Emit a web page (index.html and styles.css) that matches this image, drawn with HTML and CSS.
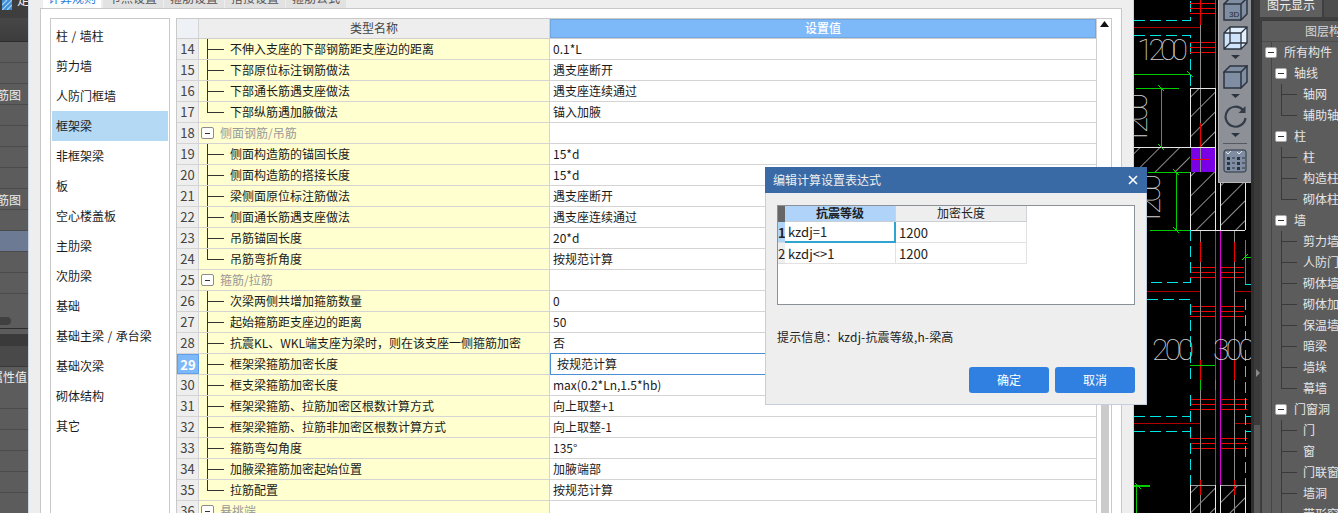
FILE: index.html
```html
<!DOCTYPE html>
<html lang="zh-CN">
<head>
<meta charset="utf-8">
<title>计算设置</title>
<link rel="stylesheet" href="styles.css">
</head>
<body>
<div class="app">
  <aside class="side">
    <div class="side-title"><svg class="logo" width="10" height="10" viewBox="0 0 10 10"><rect width="10" height="10" fill="#3f8fd6"/><path d="M0 5L5 0M0 10L10 0M5 10L10 5" stroke="#a9d3f2" stroke-width="1.200"/></svg><span>定</span></div>
    <div class="side-band"></div>
    <div class="side-row"></div>
    <div class="side-row"></div>
    <div class="side-row"><span>钢筋图</span></div>
    <div class="side-row"></div>
    <div class="side-row"></div>
    <div class="side-row"></div>
    <div class="side-row"></div>
    <div class="side-row"><span>钢筋图</span></div>
    <div class="side-row"></div>
    <div class="side-row is-sel"></div>
    <div class="side-row"></div>
    <div class="side-row"></div>
    <div class="side-scroll"><i></i></div>
    <div class="side-dark"></div>
    <div class="side-sub"></div>
    <div class="side-row tall"><span>属性值</span></div>
    <div class="side-row"></div>
    <div class="side-row"></div>
    <div class="side-row"></div>
    <div class="side-row"></div>
  </aside>

  <main class="main">
    <nav class="tabs">
      <div class="tab is-on">计算规则</div>
      <div class="tab">节点设置</div>
      <div class="tab">箍筋设置</div>
      <div class="tab">搭接设置</div>
      <div class="tab">箍筋公式</div>
    </nav>
    <section class="panel">
      <ul class="cats">
        <li>柱 / 墙柱</li>
        <li>剪力墙</li>
        <li>人防门框墙</li>
        <li class="is-on">框架梁</li>
        <li>非框架梁</li>
        <li>板</li>
        <li>空心楼盖板</li>
        <li>主肋梁</li>
        <li>次肋梁</li>
        <li>基础</li>
        <li>基础主梁 / 承台梁</li>
        <li>基础次梁</li>
        <li>砌体结构</li>
        <li>其它</li>
      </ul>
      <div class="grid">
        <div class="grid-table">
          <div class="row head">
            <div class="num"></div>
            <div class="name">类型名称</div>
            <div class="val">设置值</div>
          </div>
          <div class="row"><div class="num">14</div><div class="name"><i class="tl"></i>不伸入支座的下部钢筋距支座边的距离</div><div class="val">0.1*L</div></div>
          <div class="row"><div class="num">15</div><div class="name"><i class="tl"></i>下部原位标注钢筋做法</div><div class="val">遇支座断开</div></div>
          <div class="row"><div class="num">16</div><div class="name"><i class="tl"></i>下部通长筋遇支座做法</div><div class="val">遇支座连续通过</div></div>
          <div class="row"><div class="num">17</div><div class="name"><i class="tl end"></i>下部纵筋遇加腋做法</div><div class="val">锚入加腋</div></div>
          <div class="row"><div class="num">18</div><div class="name group"><i class="minus"></i>侧面钢筋/吊筋</div><div class="val"></div></div>
          <div class="row"><div class="num">19</div><div class="name"><i class="tl"></i>侧面构造筋的锚固长度</div><div class="val">15*d</div></div>
          <div class="row"><div class="num">20</div><div class="name"><i class="tl"></i>侧面构造筋的搭接长度</div><div class="val">15*d</div></div>
          <div class="row"><div class="num">21</div><div class="name"><i class="tl"></i>梁侧面原位标注筋做法</div><div class="val">遇支座断开</div></div>
          <div class="row"><div class="num">22</div><div class="name"><i class="tl"></i>侧面通长筋遇支座做法</div><div class="val">遇支座连续通过</div></div>
          <div class="row"><div class="num">23</div><div class="name"><i class="tl"></i>吊筋锚固长度</div><div class="val">20*d</div></div>
          <div class="row"><div class="num">24</div><div class="name"><i class="tl end"></i>吊筋弯折角度</div><div class="val">按规范计算</div></div>
          <div class="row"><div class="num">25</div><div class="name group"><i class="minus"></i>箍筋/拉筋</div><div class="val"></div></div>
          <div class="row"><div class="num">26</div><div class="name"><i class="tl"></i>次梁两侧共增加箍筋数量</div><div class="val">0</div></div>
          <div class="row"><div class="num">27</div><div class="name"><i class="tl"></i>起始箍筋距支座边的距离</div><div class="val">50</div></div>
          <div class="row"><div class="num">28</div><div class="name"><i class="tl"></i>抗震KL、WKL端支座为梁时，则在该支座一侧箍筋加密</div><div class="val">否</div></div>
          <div class="row is-active"><div class="num">29</div><div class="name"><i class="tl"></i>框架梁箍筋加密长度</div><div class="val">按规范计算</div></div>
          <div class="row"><div class="num">30</div><div class="name"><i class="tl"></i>框支梁箍筋加密长度</div><div class="val">max(0.2*Ln,1.5*hb)</div></div>
          <div class="row"><div class="num">31</div><div class="name"><i class="tl"></i>框架梁箍筋、拉筋加密区根数计算方式</div><div class="val">向上取整+1</div></div>
          <div class="row"><div class="num">32</div><div class="name"><i class="tl"></i>框架梁箍筋、拉筋非加密区根数计算方式</div><div class="val">向上取整-1</div></div>
          <div class="row"><div class="num">33</div><div class="name"><i class="tl"></i>箍筋弯勾角度</div><div class="val">135°</div></div>
          <div class="row"><div class="num">34</div><div class="name"><i class="tl"></i>加腋梁箍筋加密起始位置</div><div class="val">加腋端部</div></div>
          <div class="row"><div class="num">35</div><div class="name"><i class="tl end"></i>拉筋配置</div><div class="val">按规范计算</div></div>
          <div class="row"><div class="num">36</div><div class="name group"><i class="minus"></i>悬挑端</div><div class="val"></div></div>
        </div>
        <div class="vbar">
          <svg class="vbar-up" width="9" height="6" viewBox="0 0 9 6"><path d="M4.5 0L9 6H0z" fill="#111"/></svg>
          <div class="vbar-thumb"></div>
        </div>
      </div>
    </section>
  </main>

  <div class="cad">
    <svg class="cad-draw" width="117" height="513" viewBox="1134 0 117 513">
      <defs>
        <pattern id="hatch" width="14" height="14" patternUnits="userSpaceOnUse" patternTransform="rotate(45)">
          <rect width="1" height="14" fill="#8c8c8c"/>
        </pattern>
      </defs>
      <g shape-rendering="crispEdges" fill="none">
        <path d="M1134 20H1190V0M1134 35H1190V90" stroke="#00e5e5" stroke-dasharray="11 5"/>
        <path d="M1134 27H1200M1147 291H1200M1235 291H1251M1134 423H1200M1235 423H1251" stroke="#b00000"/>
        <path d="M1190 3H1215M1190 8H1215M1190 13H1215M1190 42H1215M1190 47H1215M1190 52H1215" stroke="#f00000"/>
        <path d="M1190 267H1215M1190 272H1215M1190 277H1215M1220 267H1244M1220 272H1244M1220 277H1244M1190 306H1215M1190 311H1215M1190 316H1215M1220 306H1244M1220 311H1244M1220 316H1244" stroke="#f00000"/>
        <path d="M1190 399H1215M1190 404H1215M1190 409H1215M1222 399H1247M1222 404H1247M1222 409H1247M1190 438H1215M1190 443H1215M1190 448H1215M1222 438H1247M1222 443H1247M1222 448H1247" stroke="#f00000"/>
        <rect x="1190" y="88" width="25" height="59" fill="url(#hatch)"/>
        <rect x="1134" y="148" width="56" height="24" fill="url(#hatch)"/>
        <rect x="1190" y="172" width="25" height="58" fill="url(#hatch)"/>
        <rect x="1220" y="172" width="25" height="58" fill="url(#hatch)"/>
        <rect x="1190" y="485" width="25" height="28" fill="url(#hatch)"/>
        <rect x="1220" y="485" width="25" height="28" fill="url(#hatch)"/>
        <rect x="1191" y="148" width="24" height="24" fill="#7a00e6"/>
        <path d="M1200 0V172M1200 230V513M1234 230V513" stroke="#8c8c8c"/>
        <path d="M1200 0V25M1200 123V147M1200 242V262M1234 242V262M1200 360V390M1234 360V380M1200 480V495M1234 480V495M1191 159H1210" stroke="#f00000"/>
        <path d="M1215 0V88M1215 230V513M1220 230V513" stroke="#d800d8"/>
        <path d="M1190 88H1215M1190 88V147M1215 88V230M1134 147H1215M1190 172V230M1190 230H1245M1220 183V230M1245 183V230" stroke="#e6e6e6"/>
        <path d="M1190 485H1215M1220 485H1245" stroke="#9a9a9a"/>
        <path d="M1215 485V513M1245 485V513M1190 485V513M1220 485V513" stroke="#e6e6e6"/>
        <path d="M1190 230V282H1147M1147 299H1190V380M1190 395V485M1245 284H1251M1245 299V340M1245 350V485" stroke="#00e5e5" stroke-dasharray="11 5"/>
        <path d="M1134 416H1190M1134 431H1190M1245 416H1251M1245 431H1251" stroke="#00e5e5" stroke-dasharray="11 5"/>
        <path d="M1134 74H1190M1136 88H1179M1161 88V147M1148 172H1190M1176 172V230M1150 230H1190M1245 240V284M1245 257H1251M1190 365H1215M1136 485V513M1134 485H1150M1134 486H1150M1200 380V390M1215 380V390" stroke="#00cc00"/>
      </g>
      <path d="M1187 71L1193 77M1158 85L1164 91M1158 144L1164 150M1173 169L1179 175M1173 227L1179 233M1242 260L1248 254M1135 483L1141 489" stroke="#00e000" fill="none"/>
      <g class="cad-text">
        <text x="1137" y="60" textLength="51">1200</text>
        <text transform="translate(1147 145) rotate(-90)" textLength="52">1200</text>
        <text transform="translate(1160 226) rotate(-90)" textLength="52">1200</text>
        <text x="1152" y="360" textLength="42">200</text>
        <text x="1213" y="360" textLength="42">300</text>
      </g>
    </svg>

    <div class="tools">
      <svg class="t-cube first" width="25" height="24" viewBox="0 0 25 24"><path d="M1 7H18V23H1zM1 7L7 1H24L18 7zM18 7L24 1V17L18 23z" fill="#7f8ea3" stroke="#2c343f" stroke-width="1.500"/><text class="t-3d" x="6" y="20">3D</text></svg>
      <svg class="t-cube" width="25" height="24" viewBox="0 0 25 24"><path d="M1 7H18V23H1z" fill="#cfe4fb"/><path d="M1 7L7 1H24L18 7zM18 7L24 1V17L18 23z" fill="#e3f0fd"/><path d="M1 7H18V23H1zM1 7L7 1H24V17L18 23M18 7L24 1M7 1V17H24M7 17L1 23" fill="none" stroke="#2c343f" stroke-width="1.300"/></svg>
      <svg class="t-arrow" width="9" height="4" viewBox="0 0 9 4"><path d="M0 0H9L4.5 4z" fill="#2c343f"/></svg>
      <svg class="t-cube c3" width="25" height="24" viewBox="0 0 25 24"><path d="M1 7H18V23H1zM1 7L7 1H24L18 7zM18 7L24 1V17L18 23z" fill="#7f8ea3" stroke="#2c343f" stroke-width="1.500"/></svg>
      <svg class="t-arrow" width="9" height="4" viewBox="0 0 9 4"><path d="M0 0H9L4.5 4z" fill="#2c343f"/></svg>
      <svg class="t-rot" width="24" height="23" viewBox="0 0 24 23"><path d="M20 5A10 10 0 1 0 22.500 13" fill="none" stroke="#333c48" stroke-width="2.200"/><path d="M22.500 1V8H15.500z" fill="#333c48"/></svg>
      <svg class="t-arrow" width="9" height="4" viewBox="0 0 9 4"><path d="M0 0H9L4.5 4z" fill="#2c343f"/></svg>
      <div class="t-sep"></div>
      <svg class="t-grid" width="24" height="24" viewBox="0 0 24 24"><rect x="1" y="1" width="22" height="22" rx="2" fill="#7f8ea3" stroke="#2c343f"/><path d="M3 3l2 2 3-3M14 3l2 2 3-3" fill="none" stroke="#e8e8e8"/><path d="M4 8h3v3H4zM4 13h3v3H4zM4 18h3v3H4zM14 8h3v3h-3zM14 13h3v3h-3zM14 18h3v3h-3z" fill="#2c343f"/><path d="M9 9h3M9 14h3M9 19h3M19 9h3M19 14h3M19 19h3" stroke="#2c343f"/></svg>
    </div>
  </div>

  <div class="split"><i></i></div>

  <aside class="rpanel">
    <div class="rtabs">
      <div class="rtab is-on">图元显示</div>
      <div class="rtab">楼层</div>
    </div>
    <div class="rbox">
      <div class="rhead">图层构件</div>
      <div class="rtree">
        <div class="node l0"><i class="rminus"></i>所有构件</div>
        <div class="node l1"><i class="rminus"></i>轴线</div>
        <div class="node l2"><i class="rl"></i>轴网</div>
        <div class="node l2"><i class="rl end"></i>辅助轴线</div>
        <div class="node l1"><i class="rminus"></i>柱</div>
        <div class="node l2"><i class="rl"></i>柱</div>
        <div class="node l2"><i class="rl"></i>构造柱</div>
        <div class="node l2"><i class="rl end"></i>砌体柱</div>
        <div class="node l1"><i class="rminus"></i>墙</div>
        <div class="node l2"><i class="rl"></i>剪力墙</div>
        <div class="node l2"><i class="rl"></i>人防门框墙</div>
        <div class="node l2"><i class="rl"></i>砌体墙</div>
        <div class="node l2"><i class="rl"></i>砌体加筋</div>
        <div class="node l2"><i class="rl"></i>保温墙</div>
        <div class="node l2"><i class="rl"></i>暗梁</div>
        <div class="node l2"><i class="rl"></i>墙垛</div>
        <div class="node l2"><i class="rl end"></i>幕墙</div>
        <div class="node l1"><i class="rminus"></i>门窗洞</div>
        <div class="node l2"><i class="rl"></i>门</div>
        <div class="node l2"><i class="rl"></i>窗</div>
        <div class="node l2"><i class="rl"></i>门联窗</div>
        <div class="node l2"><i class="rl"></i>墙洞</div>
        <div class="node l2"><i class="rl"></i>带形窗</div>
      </div>
    </div>
  </aside>
</div>

<div class="dlg">
  <header class="dlg-title"><span>编辑计算设置表达式</span><svg width="10" height="10" viewBox="0 0 10 10"><path d="M1 1L9 9M9 1L1 9" stroke="#fff" stroke-width="1.600"/></svg></header>
  <div class="dlg-body">
    <div class="mini">
      <div class="mrow mhead">
        <div class="mn dark"></div>
        <div class="mc a on">抗震等级</div>
        <div class="mc b">加密长度</div>
      </div>
      <div class="mrow">
        <div class="mn on">1</div>
        <div class="mc a cur">kzdj=1</div>
        <div class="mc b">1200</div>
      </div>
      <div class="mrow">
        <div class="mn">2</div>
        <div class="mc a">kzdj&lt;&gt;1</div>
        <div class="mc b">1200</div>
      </div>
    </div>
    <p class="hint">提示信息：kzdj-抗震等级,h-梁高</p>
    <div class="btns">
      <button class="btn">确定</button>
      <button class="btn">取消</button>
    </div>
  </div>
</div>
</body>
</html>
```

FILE: styles.css
```css
* { box-sizing: border-box; }
html, body { margin: 0; padding: 0; height: 513px; overflow: hidden; }
body { font: 12px/1.2 "Noto Sans CJK SC", "Liberation Sans", sans-serif; color: #222; background: #000; position: relative; }
ul { list-style: none; margin: 0; padding: 0; }
i { display: block; font-style: normal; }
.app { display: flex; width: 1338px; height: 513px; overflow: hidden; }

/* left dark strip */
.side { width: 28px; flex: none; background: #5c5c5c; overflow: hidden; }
.side-title { height: 18px; background: #3e3e3e; display: flex; align-items: flex-start; gap: 5px; padding-left: 2px; color: #eee; font-size: 13px; white-space: nowrap; overflow: hidden; }
.side-title span { margin-top: -9px; }
.logo { flex: none; margin-top: 0; }
.side-band { height: 24px; background: linear-gradient(#474747, #3c3c3c); border-bottom: 1px solid #2e2e2e; }
.side-row { height: 21px; border-bottom: 1px solid #4b4b4b; display: flex; align-items: center; justify-content: flex-end; overflow: hidden; color: #ececec; white-space: nowrap; padding: 2px 7px 0 0; }
.side-row span { flex: none; }
.side-row.is-sel { background: #6c7a94; }
.side-row.tall { height: 42px; align-items: flex-start; padding: 3px 1px 0 0; }
.side-scroll { height: 35px; border-bottom: 1px solid #2c2c2c; display: flex; align-items: flex-end; padding-bottom: 3px; }
.side-scroll i { width: 11px; height: 8px; background: #404040; border-radius: 0 4px 4px 0; }
.side-dark { height: 17px; background: linear-gradient(#5c5c5c 5px, #3a3a3a 5px); }
.side-sub { height: 21px; background: #494949; border-bottom: 1px solid #3a3a3a; }

/* settings window */
.main { width: 1106px; flex: none; background: #eee; border-left: 1px solid #c8d3e3; border-right: 1px solid #c8d3e3; display: flex; flex-direction: column; padding: 0 11px 0 11px; }
.tabs { height: 8px; display: flex; gap: 1px; flex: none; margin-left: 3px; }
.tab { width: 60px; height: 8px; padding-bottom: 4px; background: #e2e2e2; color: #555; display: flex; align-items: flex-end; justify-content: center; line-height: 12px; white-space: nowrap; }
.tab.is-on { width: 58px; background: #fff; color: #2e7fd8; margin-right: 1px; }
.panel { flex: 1; min-height: 0; display: flex; gap: 6px; background: #fff; border: 1px solid #c8c8c8; border-bottom: 0; padding: 9px 9px 0 9px; }
.cats { width: 120px; flex: none; border: 2px solid #c9c9c9; border-width: 1px 1px 0 1px; padding: 2px 1px 0; }
.cats li { height: 30px; line-height: 29px; padding-left: 4px; color: #1a1a1a; white-space: nowrap; word-spacing: .8px; }
.cats li.is-on { background: #b3d9f5; }

.grid { flex: 1; min-width: 0; display: flex; border: 1px solid #c9c9c9; border-bottom: 0; overflow: hidden; }
.grid-table { width: 920px; flex: none; border-right: 1px solid #cfcfcf; }
.row { display: flex; height: 21px; border-bottom: 1px solid #d4d4d4; }
.row.head { height: 20px; border-bottom: 1px solid #cfcfcf; }
.num { width: 22px; flex: none; background: #eee; border-right: 1px solid #d4d4d4; text-align: center; line-height: 20px; font-size: 13px; color: #444; }
.name { width: 351px; flex: none; background: #ffffcf; border-right: 1px solid #d4d4d4; display: flex; align-items: center; white-space: nowrap; overflow: hidden; padding-left: 8px; color: #1a1a1a; }
.val { flex: 1; min-width: 0; display: flex; align-items: center; padding-left: 3px; white-space: nowrap; color: #1a1a1a; background: #fff; }
.head .num { background: #eef1f6; }
.head .name { background: #eee; justify-content: center; padding-left: 0; color: #444; }
.head .val { background: #7db9f9; justify-content: center; padding-left: 0; color: #fff; border: 1px solid #72a6e0; font-weight: 500; }
.tl { width: 17px; height: 21px; margin-right: 6px; flex: none; align-self: flex-start; border-left: 1px solid #333; background: linear-gradient(#333, #333) no-repeat 0 10px / 100% 1px; }
.tl.end { height: 11px; border-bottom: 1px solid #333; background: none; }
.group { padding-left: 2px; color: #999; }
.minus { width: 13px; height: 12px; margin-right: 6px; flex: none; background: #fff linear-gradient(#333, #333) no-repeat center / 5px 1px; border: 1px solid #8d8d8d; border-radius: 2px; }
.is-active .num { background: #7db9f9; color: #fff; font-weight: 700; border: 1px solid #5fa0ea; }
.is-active .val { border: 1px solid #4a90d9; margin: -1px 0 -1px; padding-left: 6px; height: 22px; }

.vbar { flex: 1; position: relative; display: flex; flex-direction: column; align-items: center; padding: 2px 3px 0 3px; }
.vbar-up { flex: none; }
.vbar-thumb { flex: none; width: 8px; height: 320px; margin-top: 200px; background: #cbcbcb; }

/* drawing */
.cad { width: 117px; flex: none; position: relative; background: #000; overflow: hidden; }
.cad-draw { display: block; }
.cad-text text { font: 100 30px Roboto, "Liberation Sans", sans-serif; fill: #d0d0d0; }
.tools { position: absolute; right: 0; top: 0; width: 33px; height: 183px; background: #8d9096; border-left: 1px solid #b5b5b5; border-bottom: 1px solid #b8b8b8; display: flex; flex-direction: column; align-items: center; overflow: hidden; }
.t-cube, .t-arrow, .t-rot, .t-grid { flex: none; display: block; }
.t-cube { margin-top: 5px; }
.t-cube.first { margin-top: -3px; }
.t-cube.c3 { margin-top: 6px; }
.t-arrow { margin-top: 5px; }
.t-rot { margin-top: 7px; }
.t-sep { flex: none; width: 24px; height: 1px; margin-top: 6px; background: #555a62; }
.t-grid { margin-top: 5px; }
.t-3d { font: 8px "Liberation Sans", sans-serif; fill: #222a33; }

/* right tree */
.split { width: 9px; flex: none; background: linear-gradient(#3a3a3a 425px, #585858 425px); display: flex; align-items: flex-start; justify-content: flex-end; border-left: 3px solid #2f2f2f; }
.split i { width: 0; height: 0; margin: 369px 0 0; border-left: 4px solid #8a8a8a; border-top: 4px solid transparent; border-bottom: 4px solid transparent; }
.rpanel { width: 78px; flex: none; background: #3f3f3f; display: flex; flex-direction: column; overflow: hidden; }
.rtabs { height: 20px; flex: none; display: flex; gap: 2px; overflow: hidden; background: #3f3f3f; }
.rtab { flex: none; width: 62px; height: 17px; background: #4d4d4d; color: #c9c9c9; font-size: 12px; line-height: 10px; text-align: center; white-space: nowrap; overflow: hidden; }
.rtab.is-on { background: #5f5f5f; color: #eee; }
.rbox { flex: 1; min-height: 0; margin-left: 1px; width: 90px; background: #5c5c5c; border-left: 1px solid #3a3a3a; border-top: 1px solid #3a3a3a; }
.rhead { height: 21px; line-height: 20px; padding-left: 43px; color: #d8d8d8; white-space: nowrap; border-bottom: 1px solid #4c4c4c; }
.rtree { margin-left: 9px; border-left: 1px solid #454545; }
.node { height: 21px; display: flex; align-items: center; color: #e6e6e6; white-space: nowrap; }
.rminus { width: 12px; height: 11px; flex: none; background: #fff linear-gradient(#333, #333) no-repeat center / 6px 1px; border: 1px solid #aaa; border-radius: 2px; margin-right: 7px; }
.l0 .rminus { margin-left: -7px; }
.l1 .rminus { margin-left: 3px; }
.rl { width: 16px; height: 21px; flex: none; margin: 0 6px 0 9px; border-left: 1px solid #3a3a3a; background: linear-gradient(#3a3a3a, #3a3a3a) no-repeat 0 10px / 100% 1px; align-self: flex-start; }
.rl.end { height: 11px; border-bottom: 1px solid #3a3a3a; background: none; }

/* dialog */
.dlg { position: absolute; left: 765px; top: 167px; width: 382px; height: 238px; background: #eee; border: 1px solid #c3cede; border-top: 0; display: flex; flex-direction: column; }
.dlg-title { height: 26px; flex: none; margin: 0 -1px; background: #396aa5; color: #f0f0f0; display: flex; align-items: center; justify-content: space-between; padding: 0 9px 0 8px; }
.dlg-body { flex: 1; padding: 12px 11px 10px 11px; display: flex; flex-direction: column; }
.mini { height: 100px; flex: none; background: #fff; border: 1px solid #8c9099; }
.mrow { display: flex; height: 21px; }
.mhead { height: 16px; }
.mn { width: 7px; flex: none; background: #eee; border-bottom: 1px solid #ddd; font-size: 13px; line-height: 22px; overflow: hidden; color: #222; }
.mn.dark { background: #666; border: 0; }
.mn.on { background: #b0d4f9; font-weight: 700; }
.mc { flex: none; display: flex; align-items: center; padding: 1px 0 0 3px; border-right: 1px solid #e2e2e2; border-bottom: 1px solid #e2e2e2; font-size: 13px; color: #222; white-space: nowrap; }
.mc.a { width: 111px; }
.mc.b { width: 131px; }
.mhead .mc { justify-content: center; padding: 0; font-size: 12px; background: #eee; border-right: 1px solid #cfd3d9; border-bottom: 1px solid #c9cdd4; }
.mhead .mc.on { background: #b0d4f9; font-weight: 700; }
.mc.cur { border-right: 2px solid #2fa4d0; border-bottom: 2px solid #2fa4d0; }
.hint { margin: 24px 0 0; color: #222; height: 16px; line-height: 16px; letter-spacing: .14px; }
.btns { margin-top: 22px; display: flex; justify-content: flex-end; gap: 6px; }
.btn { width: 80px; height: 26px; border: 0; border-radius: 3px; background: #2f80e0; color: #fff; font: inherit; padding: 0; }
```
